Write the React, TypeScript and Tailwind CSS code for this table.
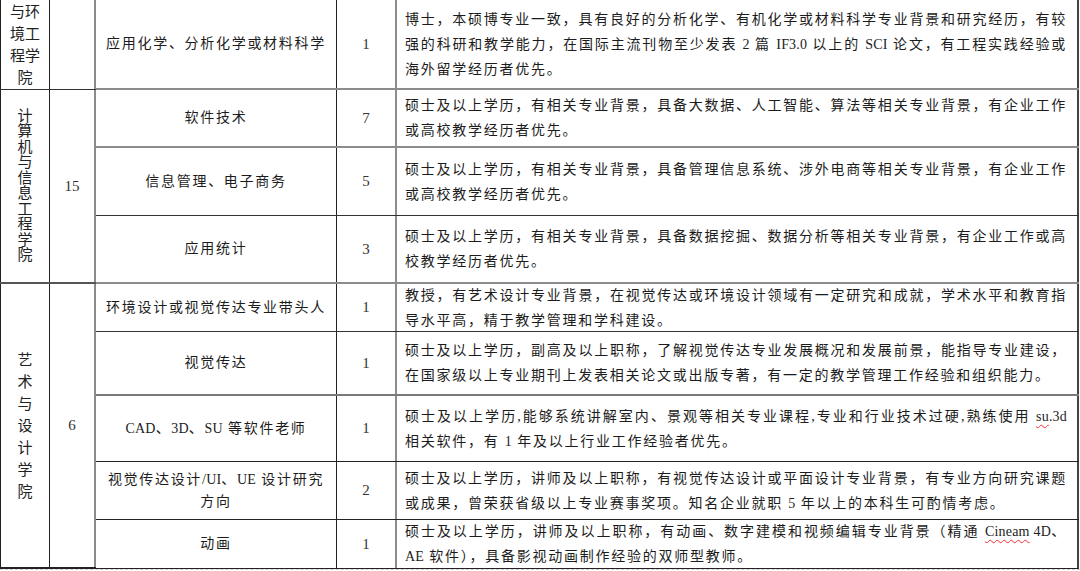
import React from 'react';

type Row = {
  title: React.ReactNode;
  count: string;
  height: string;
  lines: React.ReactNode[];
  border: string;
};

// latin runs in the SimSun-style source are set tight, only the CJK is spaced out
const Latin = ({ children }: { children: React.ReactNode }) => (
  <span className="tracking-[0.2px]">{children}</span>
);

const tight = (text: string) =>
  text.split(/([A-Za-z0-9./]+)/).map((part, i) =>
    /^[A-Za-z0-9./]+$/.test(part) ? <Latin key={i}>{part}</Latin> : part
  );

const Wavy = ({ children }: { children: React.ReactNode }) => (
  <span className="underline decoration-wavy decoration-red-500 decoration-1 underline-offset-[3px]">{children}</span>
);

const rows: Row[] = [
  {
    title: '应用化学、分析化学或材料科学',
    count: '1',
    height: 'h-[90px]',
    border: 'border-b-2 border-b-[#8c8c8c]',
    lines: [
      '博士，本硕博专业一致，具有良好的分析化学、有机化学或材料科学专业背景和研究经历，有较',
      tight('强的科研和教学能力，在国际主流刊物至少发表 2 篇 IF3.0 以上的 SCI 论文，有工程实践经验或'),
      '海外留学经历者优先。'
    ]
  },
  {
    title: '软件技术',
    count: '7',
    height: 'h-[58px]',
    border: 'border-b-2 border-b-[#8c8c8c]',
    lines: [
      '硕士及以上学历，有相关专业背景，具备大数据、人工智能、算法等相关专业背景，有企业工作',
      '或高校教学经历者优先。'
    ]
  },
  {
    title: '信息管理、电子商务',
    count: '5',
    height: 'h-[68px]',
    border: 'border-b border-b-[#333]',
    lines: [
      '硕士及以上学历，有相关专业背景，具备管理信息系统、涉外电商等相关专业背景，有企业工作',
      '或高校教学经历者优先。'
    ]
  },
  {
    title: '应用统计',
    count: '3',
    height: 'h-[68px]',
    border: 'border-b-2 border-b-[#8c8c8c]',
    lines: [
      '硕士及以上学历，有相关专业背景，具备数据挖掘、数据分析等相关专业背景，有企业工作或高',
      '校教学经历者优先。'
    ]
  },
  {
    title: '环境设计或视觉传达专业带头人',
    count: '1',
    height: 'h-[48px]',
    border: 'border-b border-b-[#333]',
    lines: [
      '教授，有艺术设计专业背景，在视觉传达或环境设计领域有一定研究和成就，学术水平和教育指',
      '导水平高，精于教学管理和学科建设。'
    ]
  },
  {
    title: '视觉传达',
    count: '1',
    height: 'h-[64px]',
    border: 'border-b-2 border-b-[#7a7a7a]',
    lines: [
      '硕士及以上学历，副高及以上职称，了解视觉传达专业发展概况和发展前景，能指导专业建设，',
      '在国家级以上专业期刊上发表相关论文或出版专著，有一定的教学管理工作经验和组织能力。'
    ]
  },
  {
    title: <>{tight('CAD、3D、SU 等软件老师')}</>,
    count: '1',
    height: 'h-[66px]',
    border: 'border-b border-b-[#222]',
    lines: [
      <>
        硕士及以上学历,能够系统讲解室内、景观等相关专业课程,专业和行业技术过硬,熟练使用{' '}
        <Latin>
          <Wavy>su</Wavy>.3d
        </Latin>
      </>,
      tight('相关软件，有 1 年及以上行业工作经验者优先。')
    ]
  },
  {
    title: (
      <>
        {tight('视觉传达设计/UI、UE 设计研究')}
        <br />
        方向
      </>
    ),
    count: '2',
    height: 'h-[58px]',
    border: 'border-b border-b-[#222]',
    lines: [
      '硕士及以上学历，讲师及以上职称，有视觉传达设计或平面设计专业背景，有专业方向研究课题',
      tight('或成果，曾荣获省级以上专业赛事奖项。知名企业就职 5 年以上的本科生可酌情考虑。')
    ]
  },
  {
    title: '动画',
    count: '1',
    height: 'h-[49px]',
    border: 'border-b border-b-[#222]',
    lines: [
      <>
        硕士及以上学历，讲师及以上职称，有动画、数字建模和视频编辑专业背景（精通{' '}
        <Latin>
          <Wavy>Cineam</Wavy> 4D
        </Latin>
        、
      </>,
      tight('AE 软件），具备影视动画制作经验的双师型教师。')
    ]
  }
];

const cjk = "font-['Liberation_Serif','Noto_Sans_CJK_SC',serif]";

const Description = ({ lines }: { lines: React.ReactNode[] }) => (
  <div className="w-[662px] text-[14px] leading-[25px] tracking-[1.75px] text-[#1c1c1c]">
    {lines.map((line, i) => (
      <div
        key={i}
        className={i < lines.length - 1 ? 'whitespace-nowrap text-justify [text-align-last:justify]' : 'whitespace-nowrap'}
      >
        {line}
      </div>
    ))}
  </div>
);

export default function App() {
  return (
    <div lang="zh-CN" className={`w-[1080px] h-[571px] overflow-hidden bg-white ${cjk}`}>
      <div className="flex">
        {/* college + head count columns */}
        <div className="flex flex-col w-[96px] shrink-0">
          <div className="flex h-[90px] border-b border-b-[#333]">
            <div className="w-[50px] border-l border-r border-[#222] flex items-center justify-center">
              <div className="w-[34px] text-center text-[15px] leading-[22px] text-[#222] break-all">与环境工程学院</div>
            </div>
            <div className="w-[46px] border-r-2 border-r-[#8c8c8c]" />
          </div>
          <div className="flex h-[194px] border-b-2 border-b-[#555]">
            <div className="w-[50px] border-l border-r border-[#222] flex items-center justify-center">
              <div className="w-[16px] text-center text-[15px] leading-[15.5px] text-[#222] break-all">计算机与信息工程学院</div>
            </div>
            <div className="w-[46px] border-r-2 border-r-[#8c8c8c] flex items-center justify-center text-[15px] text-[#333] font-['Liberation_Serif',serif]">
              15
            </div>
          </div>
          <div className="flex h-[285px] border-b-2 border-b-[#222]">
            <div className="w-[50px] border-l border-r border-[#222] flex items-center justify-center">
              <div className="w-[16px] text-center text-[15px] leading-[22px] text-[#222] break-all">艺术与设计学院</div>
            </div>
            <div className="w-[46px] border-r-2 border-r-[#8c8c8c] flex items-center justify-center text-[15px] text-[#333] font-['Liberation_Serif',serif]">
              6
            </div>
          </div>
        </div>

        {/* position rows */}
        <div className="flex flex-col">
          {rows.map((row, i) => (
            <div key={i} className={`flex ${row.height} ${row.border}`}>
              <div className="w-[241px] border-r border-r-[#222] flex items-center justify-center text-center text-[14px] leading-[22px] tracking-[1.7px] text-[#1c1c1c]">
                <div>{row.title}</div>
              </div>
              <div className="w-[60px] border-r-2 border-r-[#8c8c8c] flex items-center justify-center text-[15px] text-[#333] font-['Liberation_Serif',serif]">
                {row.count}
              </div>
              <div className="w-[682px] border-r-2 border-r-[#444] flex items-center pl-[8px]">
                <Description lines={row.lines} />
              </div>
            </div>
          ))}
        </div>
      </div>
      <div className="h-[2px] border-t border-dashed border-[#d0d0d0]" />
    </div>
  );
}
